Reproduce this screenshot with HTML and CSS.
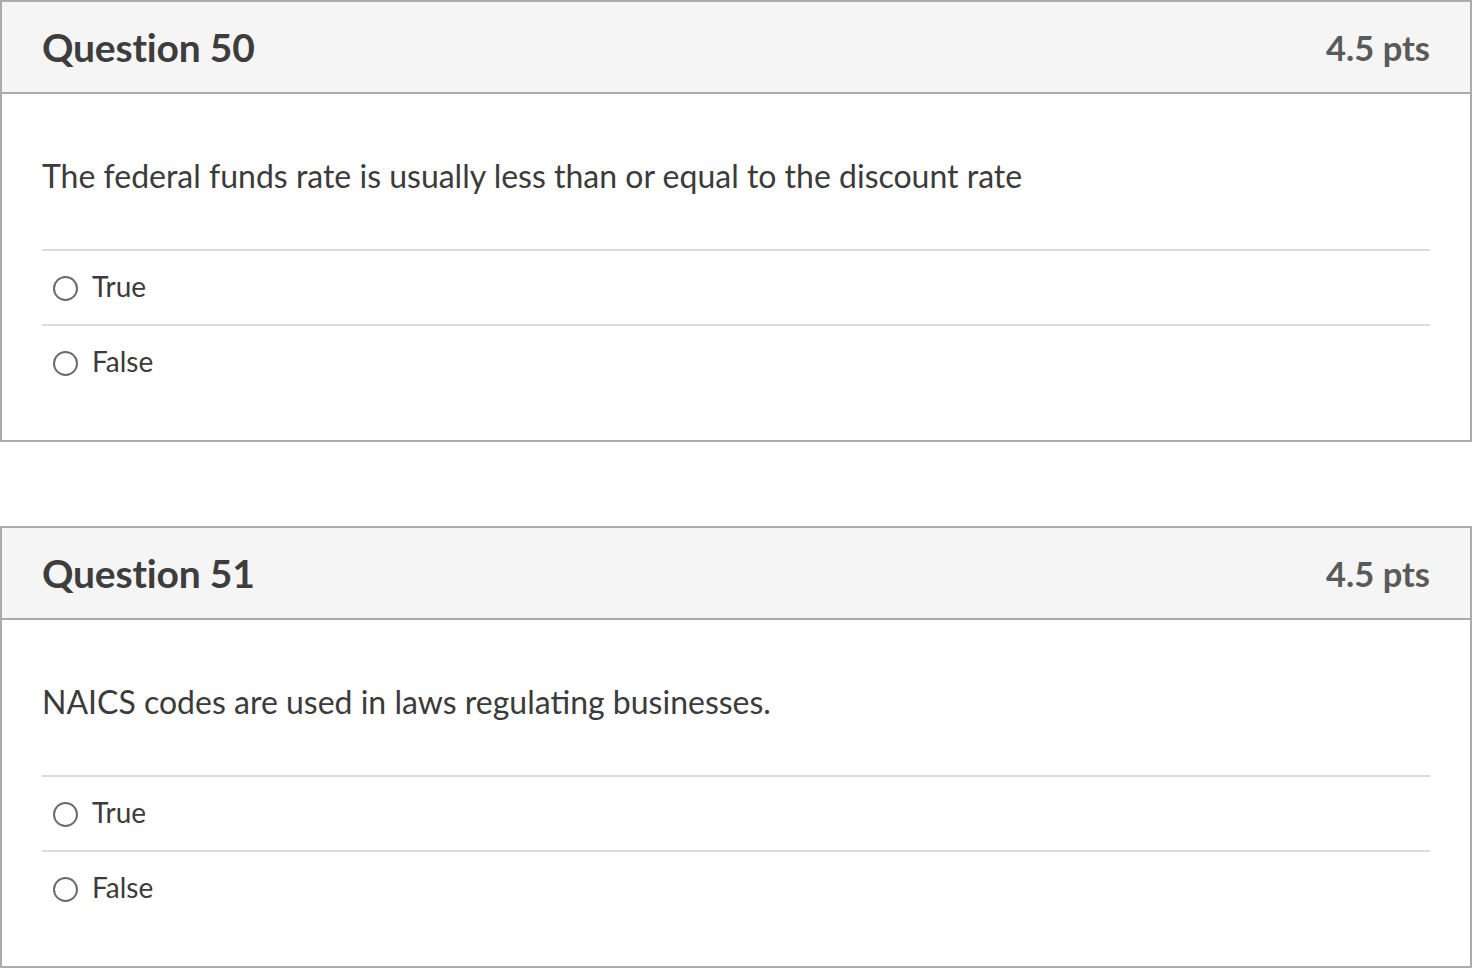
FILE: index.html
```html
<!DOCTYPE html>
<html>
<head>
<meta charset="utf-8">
<link rel="stylesheet" href="styles.css">
</head>
<body>
<div class="page">
  <section class="card">
    <header class="card-head">
      <h2 class="q-title">Question 50</h2>
      <span class="q-pts">4.5 pts</span>
    </header>
    <div class="card-body">
      <p class="q-text">The federal funds rate is usually less than or equal to the discount rate</p>
      <ul class="answers">
        <li class="answer"><span class="radio"></span><span class="label">True</span></li>
        <li class="answer"><span class="radio"></span><span class="label">False</span></li>
      </ul>
    </div>
  </section>
  <section class="card">
    <header class="card-head">
      <h2 class="q-title">Question 51</h2>
      <span class="q-pts">4.5 pts</span>
    </header>
    <div class="card-body">
      <p class="q-text">NAICS codes are used in laws regulating businesses.</p>
      <ul class="answers">
        <li class="answer"><span class="radio"></span><span class="label">True</span></li>
        <li class="answer"><span class="radio"></span><span class="label">False</span></li>
      </ul>
    </div>
  </section>
</div>
</body>
</html>
```
FILE: styles.css
```css
* { box-sizing: border-box; }
html, body { margin: 0; padding: 0; background: #fff; }
body { font-family: Lato, "Open Sans", "Liberation Sans", sans-serif; color: #3b3b3b; }
.page { width: 1472px; display: flex; flex-direction: column; gap: 84px; }
.card { border: 2px solid #ababab; background: #fff; }
.card-head {
  height: 92px;
  background: #f5f5f5;
  border-bottom: 2px solid #ababab;
  display: flex;
  align-items: center;
  justify-content: space-between;
  padding: 0 40px 0 40px;
}
.q-title { margin: 0; font-size: 39px; font-weight: 700; color: #3d3d3d; letter-spacing: -0.2px; }
.q-pts { font-size: 34.5px; font-weight: 700; color: #5a5a5a; }
.card-body { padding: 61px 40px 41px 40px; }
.q-text { margin: 0 0 52px 0; font-size: 32px; line-height: 42px; color: #3b3b3b; }
.answers { list-style: none; margin: 0; padding: 0; }
.answer {
  height: 75px;
  border-top: 2px solid #dcdcdc;
  display: flex;
  align-items: center;
  padding-left: 11px;
  gap: 14px;
  font-size: 28px;
  color: #3b3b3b;
}
.label { position: relative; top: -2px; }
.radio {
  width: 25px; height: 25px;
  border: 2px solid #6b6b6b;
  border-radius: 50%;
  flex: none;
  margin-top: 1px;
}
```
